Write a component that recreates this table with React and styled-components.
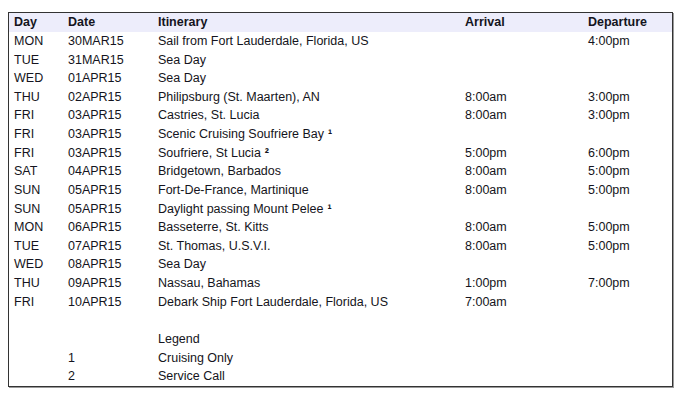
import React from 'react'
import styled, { createGlobalStyle } from 'styled-components'

const GlobalStyle = createGlobalStyle`
  body {
    margin: 0;
    background: #fff;
    font-family: "Liberation Sans", Arial, sans-serif;
  }
`

const Page = styled.div`
  padding: 12px 8px;
`

const Frame = styled.div`
  width: 665px;
  box-sizing: border-box;
  border: 1px solid #333;
  box-shadow: 1px 1px 0 #9a9a9a;
  background: #fff;
`

const Table = styled.table`
  width: 100%;
  border-collapse: collapse;
  table-layout: fixed;
  font-size: 12.5px;
  color: #141420;
`

const HeadRow = styled.tr`
  background: #ededfb;
`

const Th = styled.th`
  text-align: left;
  font-weight: bold;
  height: 18.64px;
  padding: 0 0 0 5px;
  width: ${p => p.$w || 'auto'};
`

const Td = styled.td`
  height: 18.64px;
  padding: 0 0 0 5px;
  white-space: nowrap;
`

const Note = styled.span`
  font-weight: bold;
  margin-left: 4px;
`

const stops = [
  ['MON', '30MAR15', 'Sail from Fort Lauderdale, Florida, US', '', '4:00pm'],
  ['TUE', '31MAR15', 'Sea Day', '', ''],
  ['WED', '01APR15', 'Sea Day', '', ''],
  ['THU', '02APR15', 'Philipsburg (St. Maarten), AN', '8:00am', '3:00pm'],
  ['FRI', '03APR15', 'Castries, St. Lucia', '8:00am', '3:00pm'],
  ['FRI', '03APR15', 'Scenic Cruising Soufriere Bay', '', '', '1'],
  ['FRI', '03APR15', 'Soufriere, St Lucia', '5:00pm', '6:00pm', '2'],
  ['SAT', '04APR15', 'Bridgetown, Barbados', '8:00am', '5:00pm'],
  ['SUN', '05APR15', 'Fort-De-France, Martinique', '8:00am', '5:00pm'],
  ['SUN', '05APR15', 'Daylight passing Mount Pelee', '', '', '1'],
  ['MON', '06APR15', 'Basseterre, St. Kitts', '8:00am', '5:00pm'],
  ['TUE', '07APR15', 'St. Thomas, U.S.V.I.', '8:00am', '5:00pm'],
  ['WED', '08APR15', 'Sea Day', '', ''],
  ['THU', '09APR15', 'Nassau, Bahamas', '1:00pm', '7:00pm'],
  ['FRI', '10APR15', 'Debark Ship Fort Lauderdale, Florida, US', '7:00am', ''],
]

const legend = [
  ['', 'Legend'],
  ['1', 'Cruising Only'],
  ['2', 'Service Call'],
]

const notes = { '1': '¹', '2': '²' }

export default function App() {
  return (
    <Page>
      <GlobalStyle />
      <Frame>
        <Table>
          <thead>
            <HeadRow>
              <Th $w="49px">Day</Th>
              <Th $w="85px">Date</Th>
              <Th $w="302px">Itinerary</Th>
              <Th $w="118px">Arrival</Th>
              <Th>Departure</Th>
            </HeadRow>
          </thead>
          <tbody>
            {stops.map((s, i) => (
              <tr key={i}>
                <Td>{s[0]}</Td>
                <Td>{s[1]}</Td>
                <Td>
                  {s[2]}
                  {s[5] && <Note>{notes[s[5]]}</Note>}
                </Td>
                <Td>{s[3]}</Td>
                <Td>{s[4]}</Td>
              </tr>
            ))}
            <tr>
              <Td colSpan={5} />
            </tr>
            {legend.map((l, i) => (
              <tr key={'l' + i}>
                <Td />
                <Td>{l[0]}</Td>
                <Td>{l[1]}</Td>
                <Td />
                <Td />
              </tr>
            ))}
          </tbody>
        </Table>
      </Frame>
    </Page>
  )
}
